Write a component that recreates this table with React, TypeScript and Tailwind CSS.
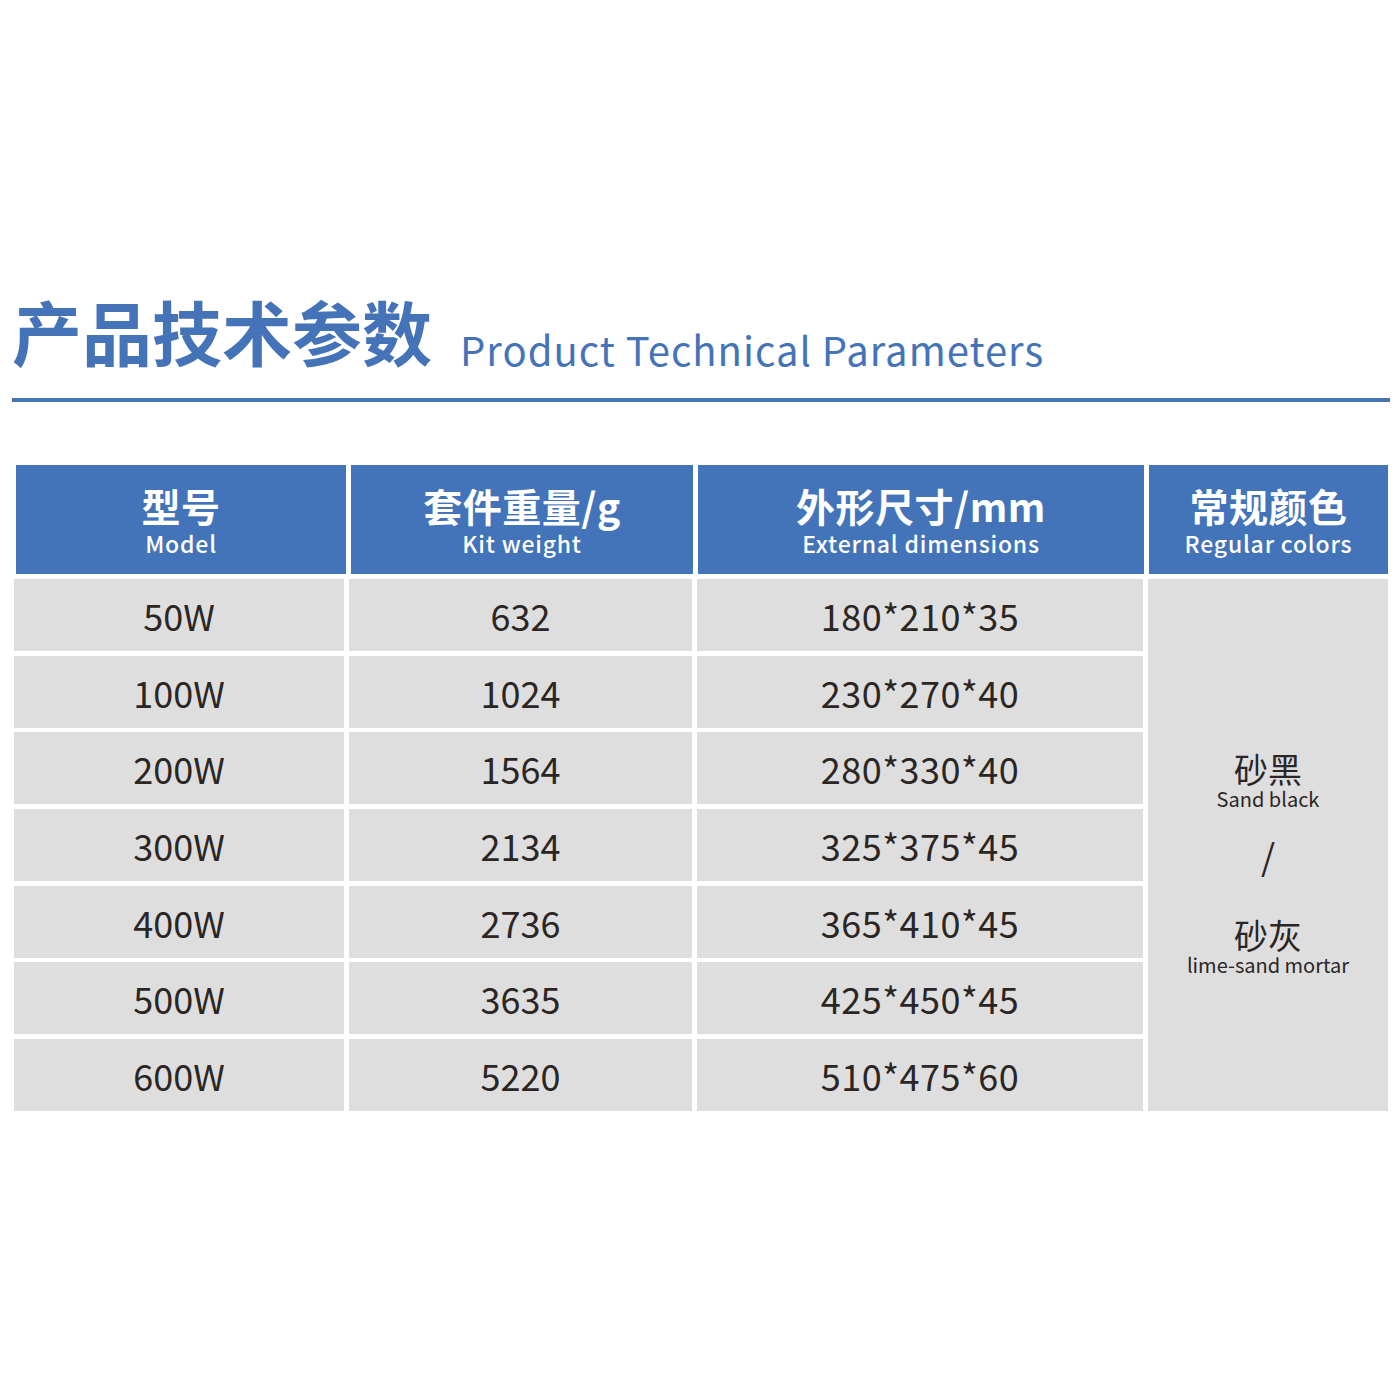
import React from 'react';

type Row = {
  model: string;
  weight: string;
  size: string;
};

const rows: Row[] = [
  { model: '50W', weight: '632', size: '180*210*35' },
  { model: '100W', weight: '1024', size: '230*270*40' },
  { model: '200W', weight: '1564', size: '280*330*40' },
  { model: '300W', weight: '2134', size: '325*375*45' },
  { model: '400W', weight: '2736', size: '365*410*45' },
  { model: '500W', weight: '3635', size: '425*450*45' },
  { model: '600W', weight: '5220', size: '510*475*60' },
];

const headers = [
  { zh: '型号', en: 'Model' },
  { zh: '套件重量/g', en: 'Kit weight' },
  { zh: '外形尺寸/mm', en: 'External dimensions' },
  { zh: '常规颜色', en: 'Regular colors' },
];

const font = { fontFamily: '"Noto Sans CJK SC", "Noto Sans", sans-serif' };

export default function App() {
  return (
    <div className="w-[1400px] h-[1400px] bg-white text-[#2b2623]" style={font}>
      {/* Title */}
      <div className="pt-[296px] pl-[12px] flex items-baseline">
        <h1 className="text-[70px] leading-none font-bold text-[#4473b8]">产品技术参数</h1>
        <span className="ml-[28px] text-[40px] leading-none text-[#4473b8] tracking-[1px] translate-y-[5px]">
          Product Technical Parameters
        </span>
      </div>
      <div className="mt-[32px] ml-[12px] w-[1378px] h-[4px] bg-[#4473b8]" />

      {/* Table header */}
      <div className="mt-[63px] ml-[16px] grid grid-cols-[330px_342px_446px_239px] gap-x-[5px]">
        {headers.map((h) => (
          <div
            key={h.en}
            className="h-[109px] bg-[#4374b9] text-white flex flex-col items-center justify-center"
          >
            <div className="text-[39px] font-bold leading-[1.15] tracking-[0.5px]">{h.zh}</div>
            <div className="mt-[2px] text-[23px] font-medium leading-[1.15] tracking-[0.8px]">{h.en}</div>
          </div>
        ))}
      </div>

      {/* Table body */}
      <div className="mt-[5px] ml-[14px] grid grid-cols-[330px_343px_446px_240px] grid-rows-[repeat(7,72px)] gap-x-[5px] gap-y-[4.67px]">
        {rows.map((r, i) => (
          <React.Fragment key={r.model}>
            <div
              className="bg-[#dedede] flex items-center justify-center text-[36px] leading-none"
              style={{ gridRow: i + 1, gridColumn: 1 }}
            >
              {r.model}
            </div>
            <div
              className="bg-[#dedede] flex items-center justify-center text-[36px] leading-none"
              style={{ gridRow: i + 1, gridColumn: 2 }}
            >
              {r.weight}
            </div>
            <div
              className="bg-[#dedede] flex items-center justify-center text-[36px] leading-none tracking-[0.5px]"
              style={{ gridRow: i + 1, gridColumn: 3 }}
            >
              {r.size}
            </div>
          </React.Fragment>
        ))}
        <div className="col-start-4 row-start-1 row-span-7 bg-[#dedede] flex flex-col items-center pt-[171px]">
          <div className="text-[34px] leading-[1.1]">砂黑</div>
          <div className="mt-[1px] text-[20px] leading-[1.1]">Sand black</div>
          <div className="mt-[27px] text-[36px] leading-none">/</div>
          <div className="mt-[43px] text-[34px] leading-[1.1]">砂灰</div>
          <div className="text-[20px] leading-[1.1]">lime-sand mortar</div>
        </div>
      </div>
    </div>
  );
}
